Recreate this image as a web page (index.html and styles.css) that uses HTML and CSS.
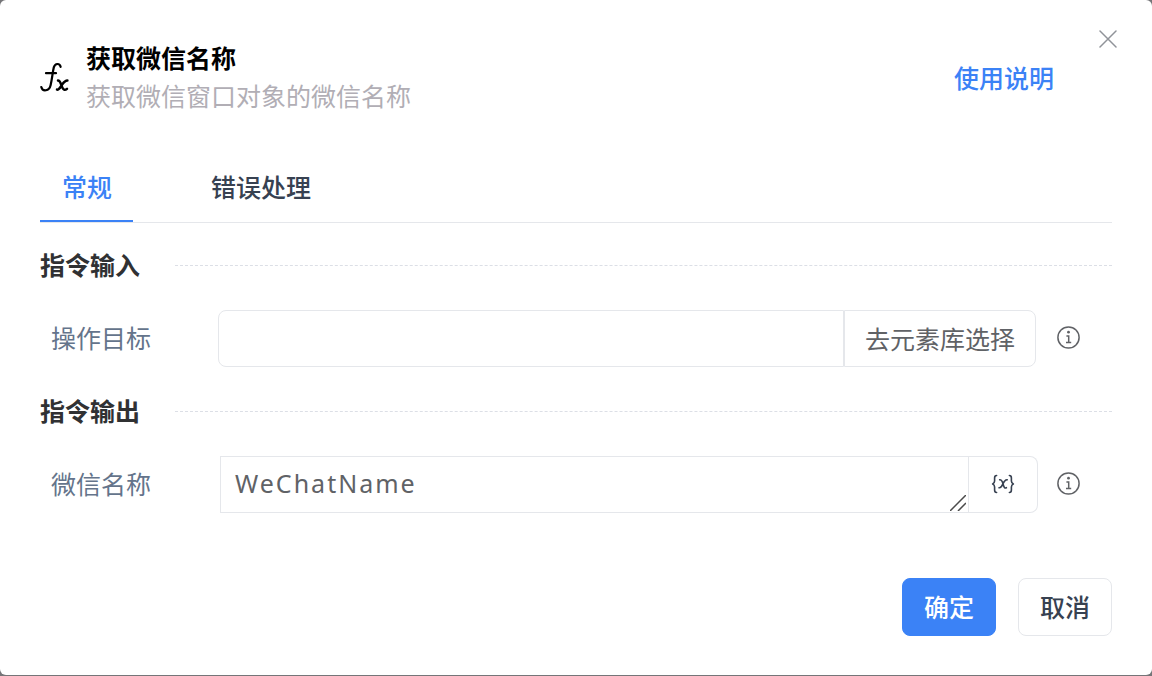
FILE: index.html
```html
<!DOCTYPE html>
<html lang="zh-CN">
<head>
<meta charset="utf-8">
<meta name="viewport" content="width=device-width, initial-scale=1">
<title>获取微信名称</title>
<link rel="stylesheet" href="styles.css">
</head>
<body>
<main class="dialog" role="dialog" aria-labelledby="dialog-title">
  <button class="close" type="button" aria-label="关闭">
    <svg width="18" height="18" viewBox="0 0 18 18" fill="none" stroke="currentColor" stroke-width="1.5" stroke-linecap="round"><path d="M1 1l16 16M17 1L1 17"/></svg>
  </button>
  <header class="header">
    <svg class="fx" width="29" height="32" viewBox="0 0 29 32" fill="none" stroke="currentColor" stroke-width="2.2" stroke-linecap="round" stroke-linejoin="round" aria-hidden="true">
      <path d="M20.6 4.8C19.8 1 15 .9 13.8 5.4C12.7 9.8 12.1 17 10.6 23.2C9.2 29.3 2.6 30 1.3 25M6 11.2h10"/>
      <path stroke-width="2.5" d="M18 18.6c1.800 0 2.300 1.400 3.300 4.300s1.600 4.800 3.100 4.900c1.200.1 2-.4 2.600-.9M27.400 18.600c-2.800 0-4.300 2.700-5.800 4.800c-1.800 2.600-2.800 4.600-4.600 4.200"/>
    </svg>
    <div class="heading">
      <h1 class="title" id="dialog-title">获取微信名称</h1>
      <p class="subtitle">获取微信窗口对象的微信名称</p>
    </div>
    <a class="help" href="#help">使用说明</a>
  </header>

  <div class="tabs" role="tablist">
    <button class="tab tab-active" type="button" role="tab" aria-selected="true">常规</button>
    <button class="tab" type="button" role="tab" aria-selected="false">错误处理</button>
  </div>

  <section class="section">
    <h2 class="section-title">指令输入</h2>
    <div class="row">
      <label class="label" for="target">操作目标</label>
      <div class="field">
        <input class="input" id="target" type="text">
        <button class="pick" type="button">去元素库选择</button>
      </div>
      <button class="info" type="button" aria-label="操作目标说明">
        <svg width="23" height="23" viewBox="0 0 23 23" fill="none" stroke="currentColor" stroke-width="1.5" aria-hidden="true"><circle cx="11.5" cy="11.5" r="10.6"/><path d="M9.4 9.9h2.3v6.6M9 16.6h5.2"/><circle cx="11.5" cy="6.2" r="1.4" fill="currentColor" stroke="none"/></svg>
      </button>
    </div>
  </section>

  <section class="section">
    <h2 class="section-title">指令输出</h2>
    <div class="row row-output">
      <label class="label" for="name">微信名称</label>
      <div class="field">
        <div class="area-wrap">
          <textarea class="area" id="name" rows="1" spellcheck="false">WeChatName</textarea>
          <svg class="grip" width="16" height="16" viewBox="0 0 16 16" fill="none" stroke="currentColor" stroke-width="1.5" aria-hidden="true"><path d="M0 16L16 0M8 16l8-8"/></svg>
        </div>
        <button class="variable" type="button" aria-label="选择变量">
          <svg width="24" height="20" viewBox="0 0 24 20" fill="none" stroke="currentColor" stroke-width="1.6" stroke-linecap="round" stroke-linejoin="round" aria-hidden="true">
            <path d="M5.6 1.5C3.8 1.5 3.6 2.4 3.6 4v3c0 1.6-.6 2.4-2 3c1.4.5 2 1.3 2 3v3c0 1.6.2 2.500 2 2.500M18.400 1.500c1.800 0 2 .9 2 2.500v3c0 1.600.6 2.400 2 3c-1.400.5-2 1.300-2 3v3c0 1.600-.2 2.500-2 2.500"/>
            <path d="M8.700 5.800c1.500-.3 2 .3 2.600 2l1.400 4.200c.5 1.700 1.200 2.300 2.700 1.700M16.200 5.800c-2-.3-3.100 1.500-4.200 4c-1.200 2.600-2 4.400-4 3.900"/>
          </svg>
        </button>
      </div>
      <button class="info" type="button" aria-label="微信名称说明">
        <svg width="23" height="23" viewBox="0 0 23 23" fill="none" stroke="currentColor" stroke-width="1.5" aria-hidden="true"><circle cx="11.5" cy="11.5" r="10.6"/><path d="M9.4 9.9h2.3v6.6M9 16.6h5.2"/><circle cx="11.5" cy="6.2" r="1.4" fill="currentColor" stroke="none"/></svg>
      </button>
    </div>
  </section>

  <footer class="footer">
    <button class="btn btn-primary" type="button">确定</button>
    <button class="btn" type="button">取消</button>
  </footer>
</main>
</body>
</html>
```
FILE: styles.css
```css
* {
  box-sizing: border-box;
}

body {
  margin: 0;
  background: #757578;
  color: #374151;
  font: 25px/38px "Noto Sans", "Noto Sans CJK SC", sans-serif;
}

button,
input,
textarea {
  margin: 0;
  padding: 0;
  border: 0;
  border-radius: 0;
  background: none;
  color: inherit;
  font: inherit;
}

button {
  cursor: pointer;
}

svg {
  display: block;
}

.dialog {
  position: relative;
  min-height: calc(100vh - 1px);
  padding: 39px 40px;
  border-radius: 6px;
  background: #fff;
}

.close {
  position: absolute;
  top: 29px;
  right: 34px;
  padding: 1px;
  color: #909399;
}

.header {
  display: flex;
  align-items: center;
  gap: 17px;
}

.fx {
  color: #000;
}

.heading {
  flex: 1;
  padding-bottom: 2px;
}

.title,
.subtitle {
  margin: 0;
  font-size: 25px;
  line-height: 38px;
}

.title {
  color: #000;
  font-weight: 700;
}

.subtitle {
  color: #b1aeb5;
}

.help {
  padding-right: 58px;
  color: #3b82f6;
  font-weight: 500;
  text-decoration: none;
}

.tabs {
  display: flex;
  gap: 56px;
  margin-top: 39px;
  border-bottom: 1px solid #e5e7eb;
}

.tab {
  height: 66px;
  padding: 0 21px 2px 22px;
  border-bottom: 2px solid transparent;
  font-weight: 500;
}

.tab-active {
  border-color: #3b82f6;
  color: #3b82f6;
}

.section {
  margin-top: 25px;
}

.tabs + .section {
  margin-top: 23px;
}

.section-title {
  display: flex;
  align-items: center;
  gap: 35px;
  margin: 0 0 26px;
  color: #303133;
  font-size: 25px;
  font-weight: 700;
}

.section-title::after {
  content: "";
  flex: 1;
  border-top: 1px dashed #dcdfe6;
}

.row {
  display: grid;
  grid-template-columns: 178px 1fr 23px;
  align-items: center;
  padding-right: 32px;
}

.label {
  padding: 0 0 2px 11px;
  color: #64748b;
}

.field {
  display: flex;
  height: 57px;
  margin-right: 21px;
}

.input {
  flex: 1;
  min-width: 0;
  padding: 0 15px;
  border: 1px solid #e5e7eb;
  border-radius: 8px 0 0 8px;
}

.pick {
  padding: 0 20px;
  border: 1px solid #e5e7eb;
  border-radius: 0 8px 8px 0;
  color: #606266;
}

.info {
  padding-bottom: 2px;
  color: #606266;
}

.row-output {
  grid-template-columns: 180px 1fr 23px;
}

.row-output .field {
  margin-right: 19px;
}

.area-wrap {
  position: relative;
  flex: 1;
  min-width: 0;
}

.area {
  display: block;
  width: 100%;
  height: 100%;
  padding: 7px 14px;
  overflow: hidden;
  resize: none;
  border: 1px solid #e5e7eb;
  color: #606266;
  letter-spacing: 2px;
}

.grip {
  position: absolute;
  right: 3px;
  bottom: 2px;
  color: #4b4b4b;
}

.variable {
  display: flex;
  align-items: center;
  justify-content: center;
  width: 69px;
  padding-bottom: 2px;
  border: 1px solid #e5e7eb;
  border-left: 0;
  border-radius: 0 8px 8px 0;
}

.footer {
  display: flex;
  justify-content: flex-end;
  gap: 22px;
  margin-top: 65px;
}

.btn {
  height: 58px;
  padding: 0 21px;
  border: 1px solid #e5e7eb;
  border-radius: 8px;
  font-weight: 500;
}

.btn-primary {
  border-color: #3b82f6;
  background: #3b82f6;
  color: #fff;
}
```
